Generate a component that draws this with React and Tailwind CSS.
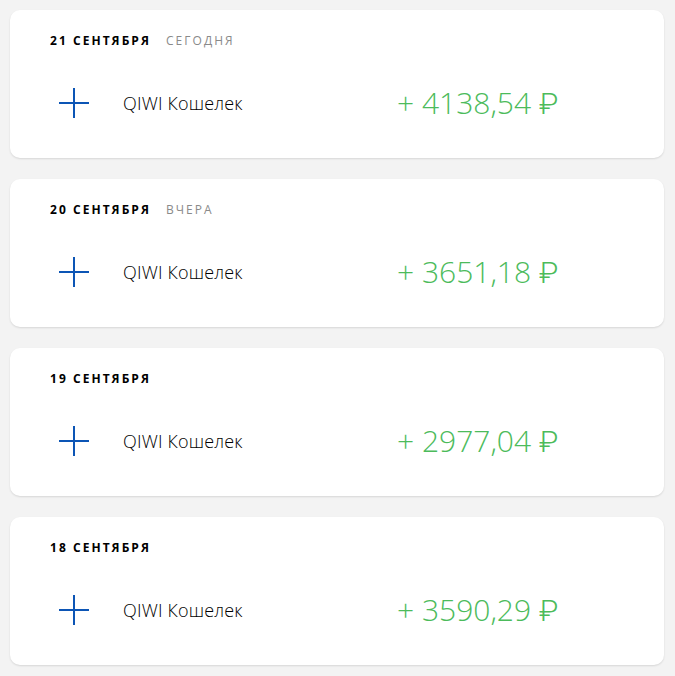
const OPERACOES = [
  { data: "21 сентября", rotulo: "сегодня", valor: "+ 4138,54 ₽" },
  { data: "20 сентября", rotulo: "вчера", valor: "+ 3651,18 ₽" },
  { data: "19 сентября", rotulo: "", valor: "+ 2977,04 ₽" },
  { data: "18 сентября", rotulo: "", valor: "+ 3590,29 ₽" },
]

function IconePlus() {
  return (
    <svg width="30" height="30" viewBox="0 0 30 30" fill="none">
      <path d="M15 0v30M0 15h30" stroke="#0c55b5" strokeWidth="2" />
    </svg>
  )
}

function CartaoDia({ data, rotulo, valor }) {
  return (
    <div className="bg-white rounded-[10px] shadow-[0_1px_2px_rgba(0,0,0,0.12)] pl-[40px] pt-[23px] pb-[35px]">
      <div className="flex items-center h-4 text-[12px] uppercase tracking-[0.17em]">
        <span className="font-bold text-black">{data}</span>
        {rotulo && <span className="ml-[15px] text-[#8a8a8a]">{rotulo}</span>}
      </div>
      <div className="flex items-center h-10 mt-[34px]">
        <div className="w-[48px] flex justify-center">
          <IconePlus />
        </div>
        <div className="ml-[25px] w-[274px] text-[18px] font-light tracking-[0.01em] text-black">QIWI Кошелек</div>
        <div className="text-[30px] font-light text-[#4cbb5b] leading-none font-['Open_Sans','Roboto',sans-serif]">
          {valor}
        </div>
      </div>
    </div>
  )
}

export default function App() {
  return (
    <div className="min-h-[676px] bg-[#f3f3f3] pl-[10px] pr-[11px] pt-[10px] pb-[10px] flex flex-col gap-[21px] font-['Open_Sans',sans-serif]">
      {OPERACOES.map((o) => (
        <CartaoDia key={o.data} {...o} />
      ))}
    </div>
  )
}
